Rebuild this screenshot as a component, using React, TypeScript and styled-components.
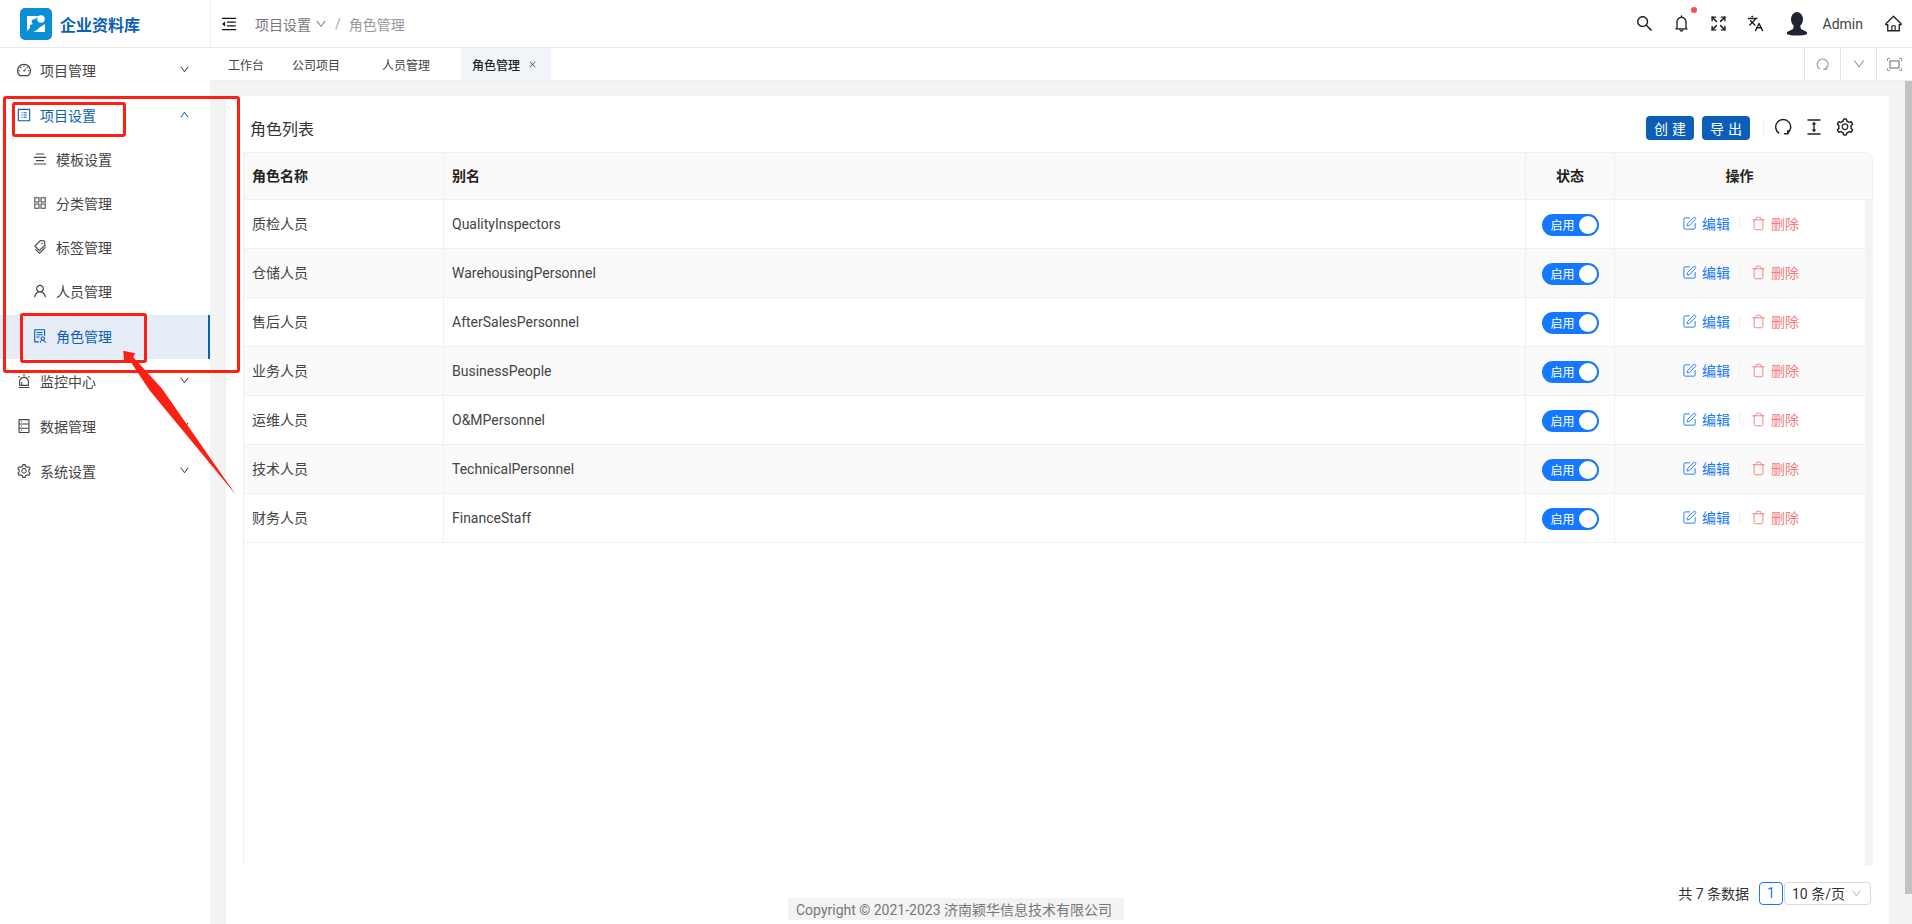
import * as React from "react";
import styled, { createGlobalStyle } from "styled-components";
import {
  AiOutlineAlert,
  AiOutlineAlignCenter,
  AiOutlineAppstore,
  AiOutlineBell,
  AiOutlineClose,
  AiOutlineColumnHeight,
  AiOutlineDashboard,
  AiOutlineDatabase,
  AiOutlineDown,
  AiOutlineHome,
  AiOutlineMenuFold,
  AiOutlineProfile,
  AiOutlineSearch,
  AiOutlineSetting,
  AiOutlineSolution,
  AiOutlineTags,
  AiOutlineUp,
  AiOutlineUser,
} from "react-icons/ai";
import { Expand, Languages, SquarePen, Trash } from "lucide-react";

const PRIMARY = "#0b5fb8";
const FONT = `Roboto, "Noto Sans CJK SC", sans-serif`;

const GlobalStyle = createGlobalStyle`
  html, body {
    margin: 0;
    padding: 0;
    overflow: hidden;
    background: #f3f3f3;
  }
  * {
    box-sizing: border-box;
  }
`;

const Page = styled.div`
  position: relative;
  width: 1912px;
  height: 924px;
  overflow: hidden;
  display: grid;
  grid-template-columns: 210px 1fr;
  font-family: ${FONT};
  font-size: 14px;
  color: #333;
`;

/* ---------- sidebar ---------- */
const Sidebar = styled.aside`
  background: #fff;
  display: flex;
  flex-direction: column;
`;

const Brand = styled.div`
  height: 48px;
  display: flex;
  align-items: center;
  gap: 8px;
  padding-left: 20px;
  border-bottom: 1px solid #e8e8e8;
`;

const BrandName = styled.span`
  font-size: 16px;
  font-weight: 700;
  color: ${PRIMARY};
`;

const MenuRow = styled.div<{ $open?: boolean; $upper?: boolean }>`
  height: 45px;
  display: flex;
  align-items: center;
  padding: 0 20px ${(p) => (p.$upper ? 2 : 0)}px 16px;
  color: ${(p) => (p.$open ? PRIMARY : "#444")};

  & > svg:first-child {
    font-size: 16px;
    width: 16px;
    margin-right: 8px;
  }
`;

const MenuLabel = styled.span`
  flex: 1;
`;

const Caret = styled.span`
  display: flex;
  font-size: 11px;
  stroke-width: 30;
  stroke: currentColor;
`;

const SubRow = styled.div<{ $active?: boolean }>`
  height: 44px;
  display: flex;
  align-items: center;
  gap: 8px;
  padding: 0 0 2px 32px;
  margin-top: ${(p) => (p.$active ? 1 : 0)}px;
  margin-bottom: ${(p) => (p.$active ? -1 : 0)}px;
  color: ${(p) => (p.$active ? PRIMARY : "#444")};
  background: ${(p) => (p.$active ? "#e6edf7" : "transparent")};
  border-right: 2px solid ${(p) => (p.$active ? PRIMARY : "transparent")};

  & > svg {
    font-size: 16px;
    flex: none;
  }
`;

/* ---------- top area ---------- */
const Main = styled.main`
  display: flex;
  flex-direction: column;
  min-width: 0;
  height: 924px;
`;

const TopBar = styled.header`
  height: 48px;
  flex: none;
  display: flex;
  align-items: center;
  background: #fff;
  border-left: 1px solid #eee;
  border-bottom: 1px solid #e8e8e8;
  padding: 0 6px 0 9px;
`;

const Fold = styled(AiOutlineMenuFold)`
  font-size: 18px;
  color: #111;
  margin-right: 17px;
`;

const Crumb = styled.span<{ $last?: boolean }>`
  color: ${(p) => (p.$last ? "#999" : "#777")};
  display: flex;
  align-items: center;
  gap: 4px;

  & > svg {
    font-size: 12px;
  }
`;

const CrumbSlash = styled.span`
  color: #aaa;
  margin: 0 8px;
`;

const TopTools = styled.div`
  margin-left: auto;
  display: flex;
  align-items: center;
  height: 100%;
`;

const ToolButton = styled.span<{ $w: number }>`
  position: relative;
  width: ${(p) => p.$w}px;
  display: flex;
  justify-content: center;
  align-items: center;
  font-size: 19px;
  color: #222;
`;

const RedDot = styled.i`
  position: absolute;
  right: 3px;
  top: -7px;
  width: 6px;
  height: 6px;
  border-radius: 50%;
  background: #ff4d4f;
`;

const UserName = styled.span`
  font-size: 14px;
  color: #444;
  margin: 0 17px 0 4px;
`;

const TabBar = styled.nav`
  height: 33px;
  flex: none;
  display: flex;
  background: #fff;
  border-bottom: 1px solid #eee;
  padding-left: 18px;
  font-size: 12px;
`;

const Tab = styled.span<{ $w: number; $active?: boolean }>`
  width: ${(p) => p.$w}px;
  display: flex;
  align-items: center;
  gap: 8px;
  padding-left: ${(p) => (p.$active ? 11 : 0)}px;
  color: ${(p) => (p.$active ? "#222" : "#444")};
  font-weight: ${(p) => (p.$active ? 500 : 400)};
  background: ${(p) => (p.$active ? "#f1f4f8" : "transparent")};

  & > svg {
    font-size: 9px;
    color: #555;
  }
`;

const TabTools = styled.div`
  margin-left: auto;
  display: flex;
`;

const TabTool = styled.span`
  width: 36px;
  display: flex;
  align-items: center;
  justify-content: center;
  border-left: 1px solid #e3e3e3;
  color: #999;
  font-size: 14px;
`;

/* ---------- content ---------- */
const Body = styled.div`
  flex: 1;
  min-height: 0;
  display: flex;
  padding: 15px 0 0 16px;
  position: relative;
`;

const Card = styled.section`
  flex: 1;
  min-width: 0;
  background: #fff;
  padding: 0 16px 0 17px;
  margin-right: 23px;
  display: flex;
  flex-direction: column;
`;

const PageScroll = styled.div`
  position: absolute;
  right: 0;
  top: 0;
  width: 7px;
  height: 813px;
  background: #c1c1c1;
`;

const CardHead = styled.div`
  height: 56px;
  flex: none;
  display: flex;
  align-items: center;
  padding: 8px 13px 0 0;
`;

const CardTitle = styled.h2`
  margin: 0 auto 0 7px;
  font-size: 16px;
  font-weight: 400;
  color: #333;
`;

const ActionButton = styled.button`
  width: 48px;
  height: 24px;
  border: 0;
  border-radius: 4px;
  background: ${PRIMARY};
  color: #fff;
  font: 14px ${FONT};
  letter-spacing: 4px;
  padding: 0 0 0 4px;
  margin-right: 8px;
`;

const HeadDivider = styled.i`
  width: 1px;
  height: 14px;
  background: #eee;
  margin: 0 3px 0 5px;
`;

const HeadIcon = styled.span`
  width: 31px;
  display: flex;
  justify-content: center;
  font-size: 20px;
  color: #222;
  margin-bottom: 3px;
`;

const TableWrap = styled.div`
  height: 714px;
  flex: none;
  position: relative;
  border-left: 1px solid #f0f0f0;
`;

const Grid = styled.table`
  width: 100%;
  border-collapse: separate;
  border-spacing: 0;
  table-layout: fixed;
`;

const HeadCell = styled.th<{ $center?: boolean; $round?: boolean }>`
  height: 48px;
  background: #fafafa;
  border-top: 1px solid #f0f0f0;
  border-bottom: 1px solid #f0f0f0;
  border-right: 1px solid #f0f0f0;
  padding: 0 ${(p) => (p.$round ? 16 : 8)}px 3px 8px;
  font-size: 14px;
  font-weight: 600;
  color: #222;
  text-align: ${(p) => (p.$center ? "center" : "left")};
  border-top-right-radius: ${(p) => (p.$round ? "8px" : 0)};
`;

const Row = styled.tr<{ $alt: boolean }>`
  background: ${(p) => (p.$alt ? "#fafafa" : "#fff")};
`;

const Cell = styled.td`
  height: 49px;
  padding: 0 8px 1px;
  color: #444;
  border-bottom: 1px solid #f0f0f0;
  border-right: 1px solid #f0f0f0;
`;

const NameCell = styled(Cell)`
  padding-bottom: 3px;
`;

const SwitchCell = styled(Cell)`
  padding: 1px 8px 0;
  text-align: center;
`;

const Gutter = styled.div`
  position: absolute;
  right: 0;
  top: 48px;
  bottom: 0;
  width: 8px;
  background: #f3f3f3;
`;

const Switch = styled.span`
  width: 57px;
  height: 22px;
  border-radius: 11px;
  background: #1677ff;
  color: #fff;
  font-size: 12px;
  display: inline-flex;
  align-items: center;
  justify-content: space-between;
  padding: 0 2px 0 9px;
  vertical-align: middle;

  &::after {
    content: "";
    width: 18px;
    height: 18px;
    border-radius: 50%;
    background: #fff;
  }
`;

const Actions = styled.div`
  display: flex;
  align-items: center;
  justify-content: center;
  padding: 0 6px 2px 0;
`;

const LinkAction = styled.a<{ $danger?: boolean }>`
  display: inline-flex;
  align-items: center;
  gap: 5px;
  font-size: 14px;
  color: ${(p) => (p.$danger ? "#f57c80" : "#1677ff")};

  & > svg {
    margin-top: 2px;
  }
`;

const ActionDivider = styled.i`
  width: 1px;
  height: 12px;
  background: #eee;
  margin: 0 11px 0 9px;
`;

const Pager = styled.div`
  height: 28px;
  margin-top: 13px;
  display: flex;
  align-items: center;
  justify-content: flex-end;
  padding-right: 2px;
  font-size: 14px;
  color: #333;
`;

const PageNo = styled.span`
  width: 24px;
  height: 23px;
  border: 1px solid #1677ff;
  border-radius: 4px;
  color: #1677ff;
  display: flex;
  align-items: center;
  justify-content: center;
  margin: 0 1px 0 10px;
`;

const PageSize = styled.span`
  width: 87px;
  height: 23px;
  border: 1px solid #d9d9d9;
  border-radius: 4px;
  display: flex;
  align-items: center;
  gap: 6px;
  padding-left: 7px;

  & > svg {
    font-size: 11px;
    color: #bbb;
  }
`;

const Copyright = styled.div`
  position: absolute;
  left: 578px;
  bottom: 4px;
  height: 22px;
  padding: 0 12px 0 8px;
  display: flex;
  align-items: center;
  background: #f3f3f3;
  border-radius: 3px;
  font-size: 14px;
  color: #777;
`;

/* ---------- red marks drawn over the screenshot ---------- */
const Mark = styled.div<{ $l: number; $t: number; $w: number; $h: number }>`
  position: absolute;
  left: ${(p) => p.$l}px;
  top: ${(p) => p.$t}px;
  width: ${(p) => p.$w}px;
  height: ${(p) => p.$h}px;
  border: 3px solid #fb1f14;
  border-radius: 3px;
  pointer-events: none;
`;

const ArrowMark = styled.svg`
  position: absolute;
  left: 0;
  top: 0;
  pointer-events: none;
`;

const menuTop = [{ icon: <AiOutlineDashboard />, label: "项目管理" }];
const menuSub = [
  { icon: <AiOutlineAlignCenter />, label: "模板设置" },
  { icon: <AiOutlineAppstore />, label: "分类管理" },
  { icon: <AiOutlineTags />, label: "标签管理" },
  { icon: <AiOutlineUser />, label: "人员管理" },
  { icon: <AiOutlineSolution />, label: "角色管理", active: true },
];
const menuBottom = [
  { icon: <AiOutlineAlert />, label: "监控中心" },
  { icon: <AiOutlineDatabase />, label: "数据管理" },
  { icon: <AiOutlineSetting />, label: "系统设置" },
];

const roles = [
  ["质检人员", "QualityInspectors"],
  ["仓储人员", "WarehousingPersonnel"],
  ["售后人员", "AfterSalesPersonnel"],
  ["业务人员", "BusinessPeople"],
  ["运维人员", "O&MPersonnel"],
  ["技术人员", "TechnicalPersonnel"],
  ["财务人员", "FinanceStaff"],
];

const Logo = () => (
  <svg width="32" height="32" viewBox="0 0 32 32">
    <rect width="32" height="32" rx="5" fill="#0a8fd6" />
    <path d="M7 8h11c-1 3-4 3-6 4-1 2 0 3 1 4l-3 1v3l-3 3z" fill="#fff" />
    <circle cx="21" cy="11" r="3.800" fill="#fff" />
    <path d="M13 24c4-1 6-5 9-6l3-2v8z" fill="#fff" />
  </svg>
);

const Avatar = () => (
  <svg width="20" height="24" viewBox="0 0 20 24">
    <ellipse cx="10" cy="7.500" rx="6" ry="7.500" fill="#222436" />
    <path d="M7 13h6l1 4 6 3v2c-3 2-17 2-20 0v-2l6-3z" fill="#222436" />
  </svg>
);

// the reload mark in this UI is an open ring with its arrow at the bottom
const ReloadIcon = ({ size }: { size: number }) => (
  <svg width={size} height={size} viewBox="0 0 24 24" fill="none" stroke="currentColor" strokeWidth="2">
    <path d="M7 20.500A10 10 0 1 1 17.500 20.500" />
    <path d="M18.500 16v5h-5" />
  </svg>
);

const FullBoxIcon = () => (
  <svg width="15" height="13" viewBox="0 0 15 13" fill="none" stroke="currentColor">
    <path d="M.5 3V.5H3M12 .5h2.500V3M14.500 10v2.500H12M3 12.500H.5V10" />
    <rect x="3" y="3" width="9" height="7" strokeWidth="1.500" />
  </svg>
);

export default function App() {
  return (
    <Page>
      <GlobalStyle />
      <Sidebar>
        <Brand>
          <Logo />
          <BrandName>企业资料库</BrandName>
        </Brand>
        {menuTop.map((m) => (
          <MenuRow key={m.label} $upper>
            {m.icon}
            <MenuLabel>{m.label}</MenuLabel>
            <Caret><AiOutlineDown /></Caret>
          </MenuRow>
        ))}
        <MenuRow $open $upper>
          <AiOutlineProfile />
          <MenuLabel>项目设置</MenuLabel>
          <Caret><AiOutlineUp /></Caret>
        </MenuRow>
        {menuSub.map((m) => (
          <SubRow key={m.label} $active={m.active}>
            {m.icon}
            <span>{m.label}</span>
          </SubRow>
        ))}
        {menuBottom.map((m) => (
          <MenuRow key={m.label}>
            {m.icon}
            <MenuLabel>{m.label}</MenuLabel>
            <Caret><AiOutlineDown /></Caret>
          </MenuRow>
        ))}
      </Sidebar>

      <Main>
        <TopBar>
          <Fold />
          <Crumb>项目设置 <AiOutlineDown /></Crumb>
          <CrumbSlash>/</CrumbSlash>
          <Crumb $last>角色管理</Crumb>
          <TopTools>
            <ToolButton $w={36}><AiOutlineSearch /></ToolButton>
            <ToolButton $w={37}><AiOutlineBell /><RedDot /></ToolButton>
            <ToolButton $w={37}><Expand size={17} /></ToolButton>
            <ToolButton $w={38}><Languages size={17} /></ToolButton>
            <ToolButton $w={44}><Avatar /></ToolButton>
            <UserName>Admin</UserName>
            <ToolButton $w={26}><AiOutlineHome /></ToolButton>
          </TopTools>
        </TopBar>
        <TabBar>
          <Tab $w={64}>工作台</Tab>
          <Tab $w={90}>公司项目</Tab>
          <Tab $w={79}>人员管理</Tab>
          <Tab $w={90} $active>角色管理 <AiOutlineClose /></Tab>
          <TabTools>
            <TabTool><ReloadIcon size={13} /></TabTool>
            <TabTool><AiOutlineDown /></TabTool>
            <TabTool><FullBoxIcon /></TabTool>
          </TabTools>
        </TabBar>
        <Body>
          <Card>
            <CardHead>
              <CardTitle>角色列表</CardTitle>
              <ActionButton>创建</ActionButton>
              <ActionButton>导出</ActionButton>
              <HeadDivider />
              <HeadIcon><ReloadIcon size={18} /></HeadIcon>
              <HeadIcon><AiOutlineColumnHeight /></HeadIcon>
              <HeadIcon><AiOutlineSetting /></HeadIcon>
            </CardHead>
            <TableWrap>
              <Grid>
                <colgroup>
                  <col style={{ width: 200 }} />
                  <col />
                  <col style={{ width: 89 }} />
                  <col style={{ width: 258 }} />
                </colgroup>
                <thead>
                  <tr>
                    <HeadCell>角色名称</HeadCell>
                    <HeadCell>别名</HeadCell>
                    <HeadCell $center>状态</HeadCell>
                    <HeadCell $center $round>操作</HeadCell>
                  </tr>
                </thead>
                <tbody>
                  {roles.map(([name, alias], i) => (
                    <Row key={name} $alt={i % 2 === 1}>
                      <NameCell>{name}</NameCell>
                      <Cell>{alias}</Cell>
                      <SwitchCell><Switch>启用</Switch></SwitchCell>
                      <Cell>
                        <Actions>
                          <LinkAction><SquarePen size={15} strokeWidth={1.5} />编辑</LinkAction>
                          <ActionDivider />
                          <LinkAction $danger><Trash size={15} strokeWidth={1.5} />删除</LinkAction>
                        </Actions>
                      </Cell>
                    </Row>
                  ))}
                </tbody>
              </Grid>
              <Gutter />
            </TableWrap>
            <Pager>
              共 7 条数据
              <PageNo>1</PageNo>
              <PageSize>10 条/页 <AiOutlineDown /></PageSize>
            </Pager>
            <Copyright>Copyright © 2021-2023 济南颖华信息技术有限公司</Copyright>
          </Card>
          <PageScroll />
        </Body>
      </Main>

      <Mark $l={3} $t={96} $w={237} $h={277} />
      <Mark $l={12} $t={102} $w={114} $h={35} />
      <Mark $l={20} $t={313} $w={127} $h={50} />
      <ArrowMark width="260" height="520" viewBox="0 0 260 520">
        <polygon
          points="123.300,350.700 135,353.300 133.300,357.300 161.700,388.300 236,495 149.300,390 130,360.700 124,360.700"
          fill="#fb1f14"
        />
      </ArrowMark>
    </Page>
  );
}
